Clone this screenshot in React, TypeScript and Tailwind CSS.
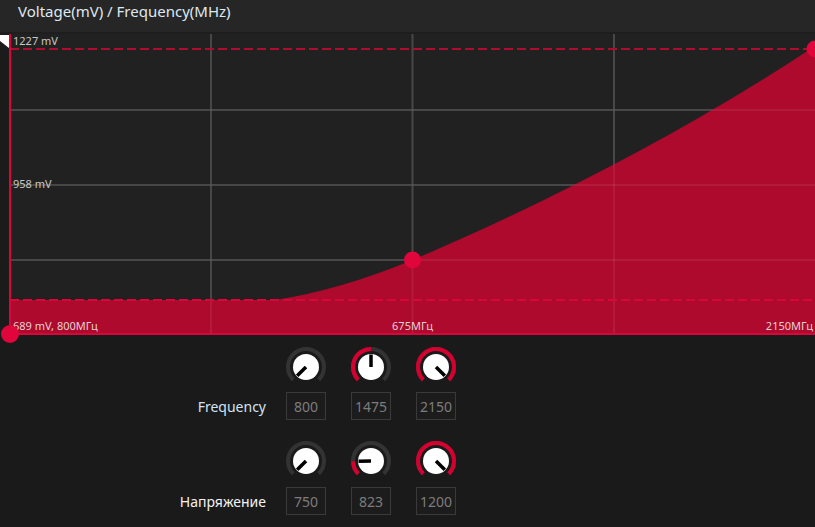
import React from "react";

const FONT = { fontFamily: '"Noto Sans", "Open Sans", sans-serif' };

function Knob({ frac }: { frac: number }) {
  const cx = 20;
  const cy = 20;
  const r = 18;
  const pt = (deg: number, rad: number) => {
    const a = (deg * Math.PI) / 180;
    return [cx + rad * Math.sin(a), cy - rad * Math.cos(a)];
  };
  const start = -135;
  const end = 135;
  const val = start + frac * 270;
  const [sx, sy] = pt(start, r);
  const [ex, ey] = pt(end, r);
  const [vx, vy] = pt(val, r);
  const track = `M${sx} ${sy} A${r} ${r} 0 1 1 ${ex} ${ey}`;
  const red =
    frac > 0
      ? `M${sx} ${sy} A${r} ${r} 0 ${val - start > 180 ? 1 : 0} 1 ${vx} ${vy}`
      : "";
  const [px, py] = pt(val, 12.5);
  return (
    <svg width="40" height="40" viewBox="0 0 40 40">
      <path d={track} fill="none" stroke="#333333" strokeWidth="4" />
      {red && <path d={red} fill="none" stroke="#d5002f" strokeWidth="4" />}
      <circle cx={cx} cy={cy} r="13" fill="#ffffff" />
      <line x1={cx} y1={cy} x2={px} y2={py} stroke="#000000" strokeWidth="3.5" />
    </svg>
  );
}

function Box({ v }: { v: string }) {
  return (
    <div className="w-[40px] h-[28px] border border-[#3a3a3a] bg-[#1c1c1c] flex items-center justify-center text-[14px] text-[#7c7c7c]">
      {v}
    </div>
  );
}

function ControlRow({
  label,
  labelColor,
  fracs,
  values,
  boxGap,
}: {
  label: string;
  labelColor: string;
  fracs: number[];
  values: string[];
  boxGap: string;
}) {
  return (
    <div className="flex flex-col">
      <div className="flex h-[40px]">
        <div className="w-[286px]" />
        <div className="flex gap-[25px]">
          {fracs.map((f, i) => (
            <Knob key={i} frac={f} />
          ))}
        </div>
      </div>
      <div className={`flex items-center h-[28px] ${boxGap}`}>
        <div className={`w-[266px] text-right text-[14px] ${labelColor}`}>{label}</div>
        <div className="ml-[20px] flex gap-[25px]">
          {values.map((v, i) => (
            <Box key={i} v={v} />
          ))}
        </div>
      </div>
    </div>
  );
}

export default function App() {
  const gridX = [211, 412.5, 614];
  const gridY = [110, 185, 260];
  const curve =
    "M10 300 L275 300 Q340 290 412.5 260 C542 205 685 132 815 46 L815 335 L10 335 Z";
  return (
    <div className="w-[815px] h-[527px] flex flex-col bg-[#1a1a1a] overflow-hidden" style={FONT}>
      <div className="h-[34px] bg-[#262626] border-b-2 border-[#1e1e1e] pl-[18px] pt-[1px] text-[15px] leading-[20px] text-[#dfe8f1] shrink-0">
        Voltage(mV) / Frequency(MHz)
      </div>
      <div className="relative z-10 flex h-[301px] shrink-0 bg-[#212121]">
        <div className="w-[9px] bg-[#1b1b1b] shrink-0">
          <svg width="9" height="16" viewBox="0 0 9 16" className="block mt-[1px]">
            <polygon points="0,0 9,0 9,13 0,6" fill="#ffffff" />
          </svg>
        </div>
        <svg
          width="806"
          height="301"
          viewBox="9 34 806 301"
          className="block overflow-visible"
        >
          <rect x="9" y="34" width="806" height="301" fill="#212121" />
          {gridX.map((x) => (
            <line key={x} x1={x} y1="34" x2={x} y2="335" stroke="#3a3a3a" strokeWidth="2" />
          ))}
          {gridY.map((y) => (
            <line key={y} x1="10" y1={y} x2="815" y2={y} stroke="#3a3a3a" strokeWidth="2" />
          ))}
          <path d={curve} fill="#ad0a2d" />
          {gridX.map((x) => (
            <line key={"o" + x} x1={x} y1="34" x2={x} y2="335" stroke="#ffffff" strokeOpacity="0.07" strokeWidth="2" />
          ))}
          {gridY.map((y) => (
            <line key={"o" + y} x1="10" y1={y} x2="815" y2={y} stroke="#ffffff" strokeOpacity="0.07" strokeWidth="2" />
          ))}
          <line x1="10" y1="49" x2="815" y2="49" stroke="#b00c30" strokeWidth="2" strokeDasharray="9 4" />
          <line x1="10" y1="300" x2="815" y2="300" stroke="#d8063b" strokeWidth="2" strokeDasharray="9 4" />
          <line x1="10" y1="334" x2="815" y2="334" stroke="#d8063b" strokeWidth="2" />
          <line x1="10" y1="34" x2="10" y2="335" stroke="#d8063b" strokeWidth="2" />
          <text x="13" y="45" fontSize="11" fill="#c8c8c8">1227 mV</text>
          <text x="13" y="188" fontSize="11" fill="#c8c8c8">958 mV</text>
          <text x="13" y="330" fontSize="11" fill="#e6d0d6">689 mV, 800МГц</text>
          <text x="412.5" y="330" fontSize="11" fill="#e6d0d6" textAnchor="middle">675МГц</text>
          <text x="813" y="330" fontSize="11" fill="#e6d0d6" textAnchor="end">2150МГц</text>
          <circle cx="412.5" cy="260" r="8.5" fill="#e0063c" />
          <circle cx="815" cy="49" r="8.5" fill="#e0063c" />
          <circle cx="10" cy="334" r="9" fill="#e0063c" />
        </svg>
      </div>
      <div className="flex flex-col pt-[12px]">
        <ControlRow
          label="Frequency"
          labelColor="text-[#d2e4f4]"
          fracs={[0, 0.5, 1]}
          values={["800", "1475", "2150"]}
          boxGap="mt-[5px]"
        />
        <div className="h-[21px]" />
        <ControlRow
          label="Напряжение"
          labelColor="text-[#f2f2f2]"
          fracs={[0, 0.162, 1]}
          values={["750", "823", "1200"]}
          boxGap="mt-[6px]"
        />
      </div>
    </div>
  );
}
